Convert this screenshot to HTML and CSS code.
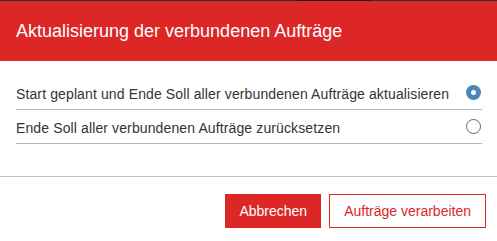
FILE: index.html
```html
<!DOCTYPE html>
<html lang="de">
<head>
<meta charset="utf-8">
<link rel="stylesheet" href="styles.css">
</head>
<body>
<div class="topline"></div>
<div class="header">Aktualisierung der verbundenen Aufträge</div>
<div class="content">
  <div class="row">
    <span class="label">Start geplant und Ende Soll aller verbundenen Aufträge aktualisieren</span>
    <span class="radio checked"></span>
  </div>
  <div class="row">
    <span class="label">Ende Soll aller verbundenen Aufträge zurücksetzen</span>
    <span class="radio"></span>
  </div>
</div>
<div class="footer">
  <button class="btn primary">Abbrechen</button>
  <button class="btn secondary">Aufträge verarbeiten</button>
</div>
</body>
</html>
```
FILE: styles.css
```css
html, body {
  margin: 0;
  padding: 0;
  background: #ffffff;
  width: 497px;
  height: 241px;
  overflow: hidden;
  font-family: "Liberation Sans", Arial, sans-serif;
}
.topline {
  height: 1px;
  background: linear-gradient(to right, #1e3347 0, #1e3347 297px, #1a1a1a 297px, #1a1a1a 370px, #1e3347 370px);
}
.header {
  height: 60px;
  background: #dd2727;
  color: #ffffff;
  font-size: 18px;
  display: flex;
  align-items: center;
  padding-left: 16px;
}
.content {
  padding: 15px 15px 32px 16px;
}
.row {
  height: 33px;
  border-bottom: 1px solid #b4b4b4;
  display: flex;
  align-items: center;
  justify-content: space-between;
  font-size: 14px;
  color: #333333;
}
.label {
  padding-top: 2px;
  letter-spacing: 0.12px;
}
.radio {
  width: 13px;
  height: 13px;
  border: 1px solid #666666;
  border-radius: 50%;
  background: #ffffff;
  margin-right: 1px;
  position: relative;
}
.radio.checked {
  width: 15px;
  height: 15px;
  border: none;
  background: #4a86b9;
}
.radio.checked::after {
  content: "";
  position: absolute;
  left: 5px;
  top: 5px;
  width: 5px;
  height: 5px;
  border-radius: 50%;
  background: #ffffff;
}
.footer {
  border-top: 1px solid #c4c4c4;
  padding: 17px 11px 0 0;
  display: flex;
  justify-content: flex-end;
  gap: 8px;
}
.btn {
  height: 34px;
  padding: 0 14px;
  font-family: "Liberation Sans", Arial, sans-serif;
  font-size: 14px;
  border: 1px solid #dd2727;
  margin: 0;
  cursor: pointer;
}
.btn.primary {
  background: #dd2727;
  color: #ffffff;
  padding: 0 13px;
}
.btn.secondary {
  background: #ffffff;
  color: #dd2727;
}
```
